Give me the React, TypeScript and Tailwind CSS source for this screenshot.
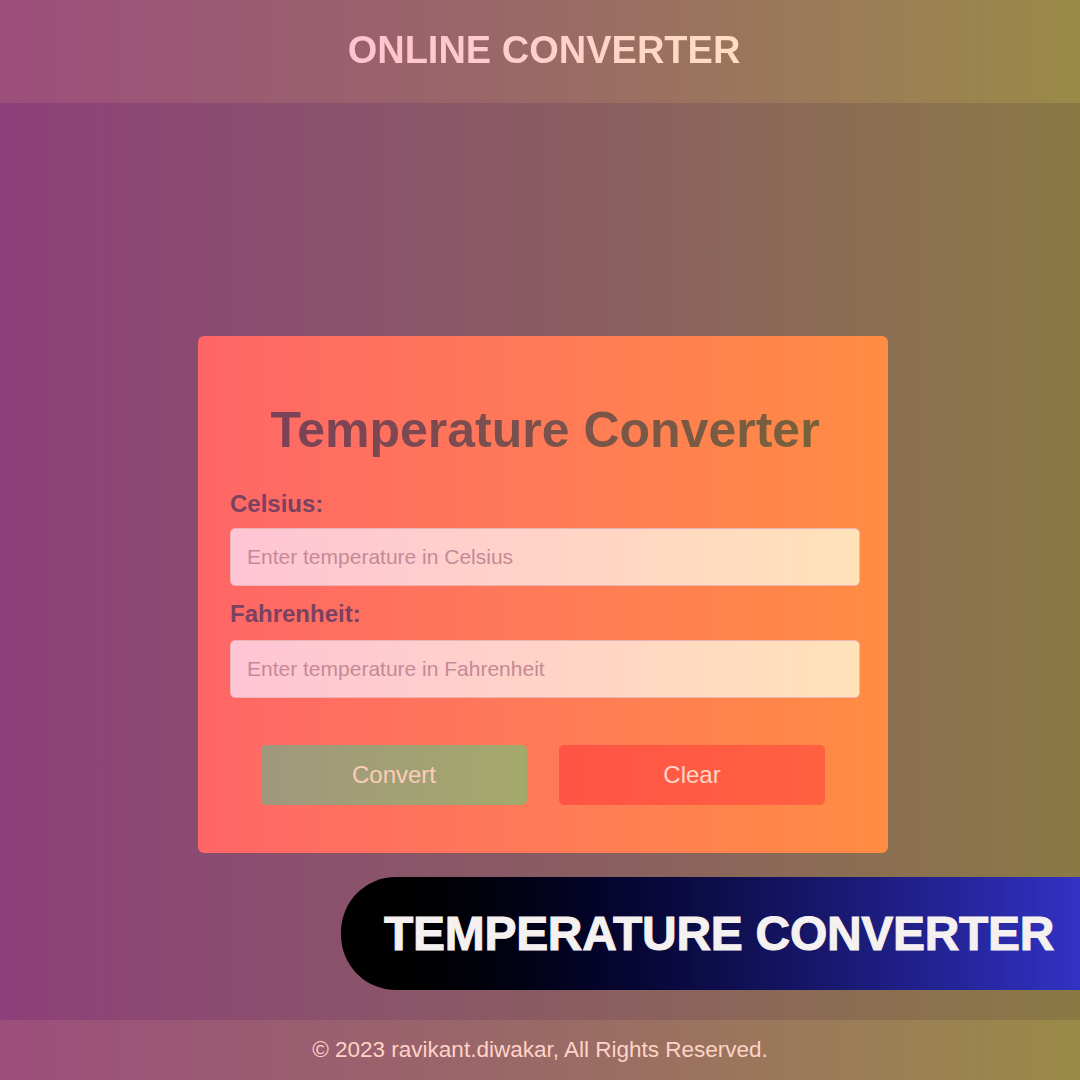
import React from "react";

export default function App() {
  return (
    <div className="relative flex h-[1080px] w-[1080px] flex-col overflow-hidden bg-gradient-to-r from-[#8c3f79] via-[#8a5b63] to-[#8b7944] font-['Liberation_Sans',Arial,sans-serif]">
      <header className="flex h-[103px] items-center justify-center bg-gradient-to-r from-[#9b4e7b] via-[#9a6966] to-[#9a8a47]">
        <h1 className="pb-[4px] pl-[8px] bg-gradient-to-r from-[#ffc2d0] to-[#ffddc2] bg-clip-text text-[38px] font-bold leading-[44px] text-transparent">
          ONLINE CONVERTER
        </h1>
      </header>

      <main className="flex flex-1 flex-col items-center pl-[6px] pt-[233px]">
        <div className="flex w-[690px] flex-col rounded-[6px] bg-gradient-to-r from-[#ff6666] to-[#ff8c42] pl-[32px] pr-[28px] pb-[48px] pt-[65px]">
          <h2 className="text-center text-[50px] font-bold leading-[58px]">
            <span className="inline-block bg-gradient-to-r from-[#7c4058] to-[#77613b] bg-clip-text text-transparent">
              Temperature Converter
            </span>
          </h2>

          <label className="mt-[31px] text-[24px] font-bold leading-[28px] text-[#7b4160]">Celsius:</label>
          <input
            className="mt-[10px] h-[58px] w-full rounded-[5px] border border-[#eab4b4] bg-gradient-to-r from-[#ffc4d5] to-[#ffe2b8] px-[16px] text-[21px] text-[#7b4160] outline-none placeholder:text-[#c58a96]"
            placeholder="Enter temperature in Celsius"
          />

          <label className="mt-[14px] text-[24px] font-bold leading-[28px] text-[#7b4160]">Fahrenheit:</label>
          <input
            className="mt-[12px] h-[58px] w-full rounded-[5px] border border-[#eab4b4] bg-gradient-to-r from-[#ffc4d5] to-[#ffe2b8] px-[16px] text-[21px] text-[#7b4160] outline-none placeholder:text-[#c58a96]"
            placeholder="Enter temperature in Fahrenheit"
          />

          <div className="mt-[47px] flex justify-center gap-[32px] pr-[4px]">
            <button className="h-[60px] w-[266px] rounded-[5px] bg-gradient-to-r from-[#a0977d] to-[#a4a96b] text-[24px] text-[#fcccbc]">
              Convert
            </button>
            <button className="h-[60px] w-[266px] rounded-[5px] bg-gradient-to-r from-[#ff5446] to-[#ff6140] text-[24px] text-[#ffd6c6]">
              Clear
            </button>
          </div>
        </div>
      </main>

      <footer className="flex h-[60px] items-center justify-center bg-gradient-to-r from-[#9b4e7b] via-[#9a6966] to-[#9a8a47]">
        <p className="pb-[1px] text-[22.5px] leading-[26px] text-[#ffd3c8]">
          © 2023 ravikant.diwakar, All Rights Reserved.
        </p>
      </footer>

      <div className="absolute left-[341px] top-[877px] flex h-[113px] w-[739px] items-center rounded-l-[55px] bg-gradient-to-r from-[#000000] to-[#3232c4] pl-[43px]">
        <span className="text-[48px] font-bold leading-[56px] tracking-[-0.3px] text-[#f6f1f1] [-webkit-text-stroke:1px_#f6f1f1]">
          TEMPERATURE CONVERTER
        </span>
      </div>
    </div>
  );
}
